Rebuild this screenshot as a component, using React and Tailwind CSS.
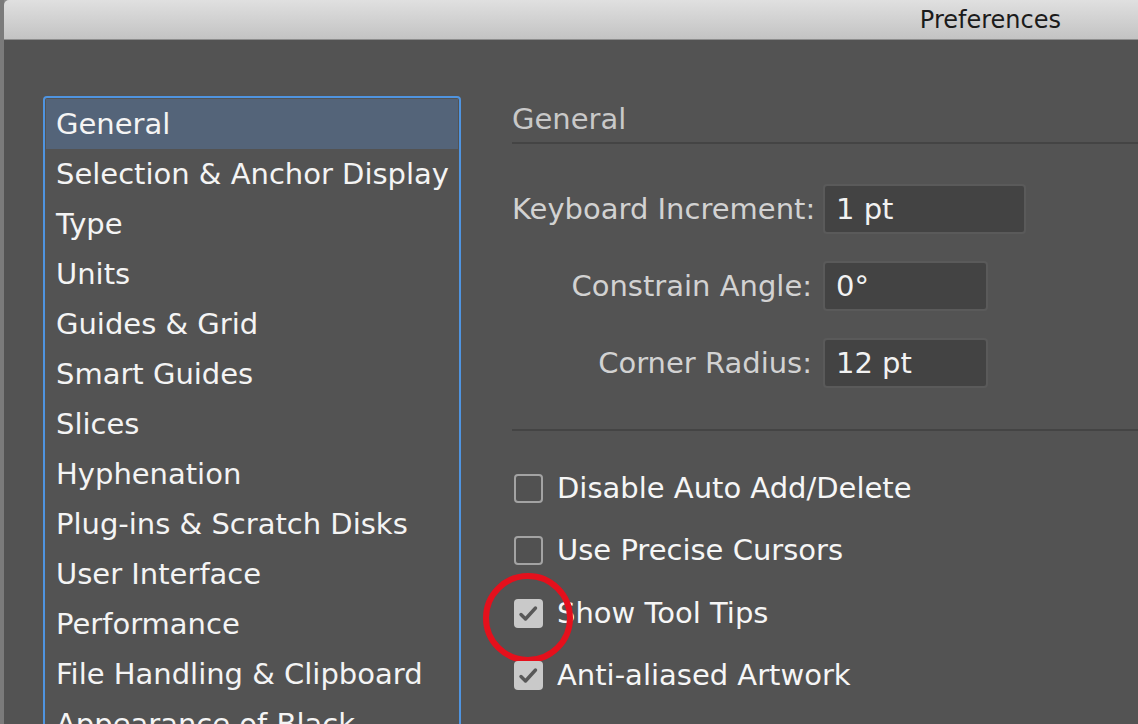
import React from "react";

const categories = [
  "General",
  "Selection & Anchor Display",
  "Type",
  "Units",
  "Guides & Grid",
  "Smart Guides",
  "Slices",
  "Hyphenation",
  "Plug-ins & Scratch Disks",
  "User Interface",
  "Performance",
  "File Handling & Clipboard",
  "Appearance of Black",
];

const fields = [
  { label: "Keyboard Increment:", value: "1 pt", wide: true },
  { label: "Constrain Angle:", value: "0°" },
  { label: "Corner Radius:", value: "12 pt" },
];

const options = [
  { label: "Disable Auto Add/Delete", checked: false },
  { label: "Use Precise Cursors", checked: false },
  { label: "Show Tool Tips", checked: true, circled: true },
  { label: "Anti-aliased Artwork", checked: true },
  { label: "Select Same Tint %", checked: false },
];

const Checkbox = ({ checked }) =>
  checked ? (
    <span className="block w-[29px] h-[29px] rounded-[4px] bg-[#c9c9c9] shrink-0">
      <svg width="29" height="29" viewBox="0 0 29 29" fill="none">
        <path
          d="M7 15.5l4.5 4.5 10-11"
          stroke="#585858"
          strokeWidth="3.4"
          strokeLinecap="round"
          strokeLinejoin="round"
        />
      </svg>
    </span>
  ) : (
    <span className="block w-[29px] h-[29px] rounded-[4px] border-2 border-[#a3a3a3] bg-[#515151] shrink-0" />
  );

export default function App() {
  return (
    <div
      className="flex w-[1138px] h-[724px] overflow-hidden bg-[#8a8a8a]"
      style={{ fontFamily: '"DejaVu Sans", "Liberation Sans", sans-serif' }}
    >
      {/* window edge */}
      <div className="w-[4px] shrink-0 bg-[#7b7b7b]" />

      <div className="flex flex-col flex-1 min-w-0">
        {/* title bar */}
        <div className="h-[40px] shrink-0 flex items-center justify-end pr-[77px] bg-gradient-to-b from-[#e0e0e0] to-[#c3c3c3] border-b border-[#8e8e8e] rounded-tl-[5px]">
          <span className="text-[24px] text-[#1b1b1b] leading-none">Preferences</span>
        </div>

        {/* body */}
        <div className="flex flex-1 min-h-0 bg-[#535353] pt-[56px] pl-[39px] leading-none">
          {/* category list */}
          <div className="w-[418px] shrink-0 border-2 border-[#4f94e0] rounded-[4px] p-[1px] self-start">
            {categories.map((c, i) => (
              <div
                key={c}
                className={`h-[50px] flex items-center pl-[10px] text-[29px] text-[#f4f4f4] whitespace-nowrap ${
                  i === 0 ? "bg-[#546479]" : ""
                }`}
              >
                {c}
              </div>
            ))}
          </div>

          {/* settings */}
          <div className="flex flex-col flex-1 min-w-0 ml-[51px]">
            <div className="h-[46px] shrink-0 flex items-center text-[29px] text-[#c9c9c9] pt-[1px]">General</div>
            <div className="h-[2px] shrink-0 bg-[#444444]" />

            <div className="flex flex-col gap-[27px] mt-[40px]">
              {fields.map((f) => (
                <div key={f.label} className="flex items-center h-[50px]">
                  <span className="w-[300px] shrink-0 text-right text-[29px] text-[#d2d2d2] whitespace-nowrap">
                    {f.label}
                  </span>
                  <div
                    className={`ml-[11px] h-[50px] shrink-0 flex items-center pl-[11px] rounded-[4px] border-2 border-[#5a5a5a] bg-[#434343] text-[29px] text-[#f2f2f2] ${
                      f.wide ? "w-[203px]" : "w-[165px]"
                    }`}
                  >
                    {f.value}
                  </div>
                </div>
              ))}
            </div>

            <div className="h-[2px] shrink-0 bg-[#444444] mt-[41px]" />

            <div className="flex flex-col mt-[26px]">
              {options.map((o) => (
                <div key={o.label} className="relative h-[62.5px] shrink-0 flex items-center pl-[2px]">
                  <Checkbox checked={o.checked} />
                  <span className="ml-[14px] text-[29px] text-[#f6f6f6] whitespace-nowrap">{o.label}</span>
                  {o.circled && (
                    <span className="absolute left-[-29px] top-[-9px] w-[90px] h-[90px] rounded-full border-[6px] border-[#e5101c]" />
                  )}
                </div>
              ))}
            </div>
          </div>
        </div>
      </div>
    </div>
  );
}
